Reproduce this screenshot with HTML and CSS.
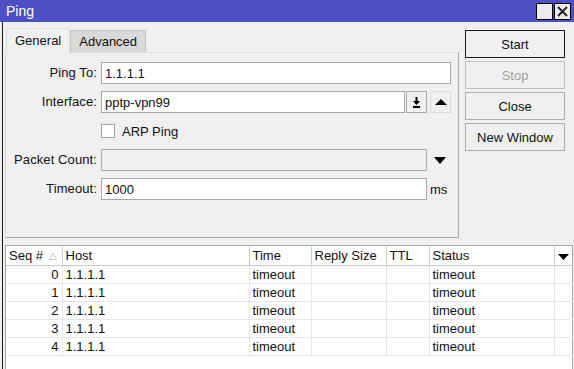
FILE: index.html
```html
<!DOCTYPE html>
<html lang="en">
<head>
    <meta charset="UTF-8">
    <title>Ping</title>
    <link rel="stylesheet" href="styles.css">
</head>
<body>
    <div class="window">
        <div class="titlebar">
            <span class="title">Ping</span>
            <span class="win-btn"><span class="max-box"></span></span>
            <span class="win-btn">
                <svg width="15" height="15" viewBox="0 0 15 15"><path d="M3 3 L12 12 M12 3 L3 12" stroke="#222" stroke-width="2"/></svg>
            </span>
        </div>
        <div class="body">
            <div class="top">
                <div class="tabs-area">
                    <div class="tabs">
                        <div class="tab active">General</div>
                        <div class="tab">Advanced</div>
                    </div>
                    <div class="tab-panel">
                        <div class="form">
                            <label class="label">Ping To:</label>
                            <div class="field"><input class="input wide" type="text" value="1.1.1.1"></div>

                            <label class="label">Interface:</label>
                            <div class="field">
                                <input class="input iface" type="text" value="pptp-vpn99">
                                <span class="icon-btn">
                                    <svg width="11" height="11" viewBox="0 0 11 11"><path d="M4.5 0 H6.5 V4 H9 L5.5 8 L2 4 H4.5 Z" fill="#000"/><rect x="2" y="9" width="7" height="2" fill="#000"/></svg>
                                </span>
                                <span class="icon-btn light">
                                    <svg width="12" height="8" viewBox="0 0 12 8"><path d="M0 7 L6 1 L12 7 Z" fill="#000"/></svg>
                                </span>
                            </div>

                            <span></span>
                            <div class="field check-row">
                                <span class="checkbox"></span>
                                <span>ARP Ping</span>
                            </div>

                            <label class="label">Packet Count:</label>
                            <div class="field">
                                <input class="input short" type="text" disabled>
                                <span class="drop">
                                    <svg width="12" height="7" viewBox="0 0 12 7"><path d="M0 0 L12 0 L6 7 Z" fill="#000"/></svg>
                                </span>
                            </div>

                            <label class="label">Timeout:</label>
                            <div class="field">
                                <input class="input short" type="text" value="1000">
                                <span class="unit">ms</span>
                            </div>
                        </div>
                    </div>
                </div>
                <div class="actions">
                    <button class="btn default">Start</button>
                    <button class="btn" disabled>Stop</button>
                    <button class="btn">Close</button>
                    <button class="btn">New Window</button>
                </div>
            </div>

            <div class="results">
                <table class="grid">
                    <colgroup>
                        <col style="width:56px">
                        <col style="width:187px">
                        <col style="width:62px">
                        <col style="width:75px">
                        <col style="width:43px">
                        <col style="width:125px">
                        <col style="width:19px">
                    </colgroup>
                    <thead>
                        <tr>
                            <th>Seq #<svg class="sort" width="8" height="8" viewBox="0 0 8 8"><path d="M0.5 7.5 L4 1 L7.5 7.5 Z" fill="none" stroke="#c8c8c8"/></svg></th>
                            <th>Host</th>
                            <th>Time</th>
                            <th>Reply Size</th>
                            <th>TTL</th>
                            <th>Status</th>
                            <th class="menu"><svg width="11" height="6" viewBox="0 0 11 6"><path d="M0 0 L11 0 L5.5 6 Z" fill="#000"/></svg></th>
                        </tr>
                    </thead>
                    <tbody>
                        <tr><td class="num">0</td><td>1.1.1.1</td><td>timeout</td><td></td><td></td><td>timeout</td><td></td></tr>
                        <tr><td class="num">1</td><td>1.1.1.1</td><td>timeout</td><td></td><td></td><td>timeout</td><td></td></tr>
                        <tr><td class="num">2</td><td>1.1.1.1</td><td>timeout</td><td></td><td></td><td>timeout</td><td></td></tr>
                        <tr><td class="num">3</td><td>1.1.1.1</td><td>timeout</td><td></td><td></td><td>timeout</td><td></td></tr>
                        <tr><td class="num">4</td><td>1.1.1.1</td><td>timeout</td><td></td><td></td><td>timeout</td><td></td></tr>
                    </tbody>
                </table>
            </div>
        </div>
    </div>
</body>
</html>
```

FILE: styles.css
```css
* {
    box-sizing: border-box;
}
body {
    margin: 0;
    font-family: "Liberation Sans", Arial, sans-serif;
    font-size: 13px;
    color: #111;
    background: #f0f0f0;
}
.window {
    width: 574px;
    height: 369px;
    overflow: hidden;
    display: flex;
    flex-direction: column;
}
.titlebar {
    height: 22px;
    flex: none;
    background: #4d50c4;
    color: #fff;
    display: flex;
    align-items: center;
    padding: 0 3px 0 6px;
}
.title {
    flex: 1;
    font-size: 14px;
}
.win-btn {
    width: 17px;
    height: 17px;
    margin-left: 1px;
    border: 1px solid #000;
    background: #ececec;
    display: flex;
    align-items: center;
    justify-content: center;
}
.max-box {
    width: 15px;
    height: 15px;
}
.body {
    flex: 1;
    margin-left: 2px;
    border-left: 1px solid #1a1a1a;
    padding: 6px 0 0 2px;
    display: flex;
    flex-direction: column;
}
.top {
    display: flex;
}
.tabs-area {
    width: 454px;
}
.tabs {
    display: flex;
    align-items: flex-end;
    height: 24px;
    padding-left: 1px;
}
.tab {
    height: 22px;
    line-height: 21px;
    padding: 0 8px;
    border: 1px solid #c4c4c4;
    border-bottom: none;
    background: #d9d9d9;
}
.tab.active {
    height: 25px;
    line-height: 23px;
    margin-bottom: -1px;
    background: #f0f0f0;
    border-color: #e0e0e0;
    position: relative;
}
.tab-panel {
    height: 186px;
    border: 1px solid #a8a8a8;
    border-top-color: #dcdcdc;
    border-left-color: #dcdcdc;
    padding-top: 9px;
}
.form {
    display: grid;
    grid-template-columns: 91px 350px;
    grid-auto-rows: 22px;
    column-gap: 4px;
    row-gap: 7px;
}
.label {
    text-align: right;
    line-height: 22px;
    white-space: nowrap;
    letter-spacing: 0.1px;
}
.field {
    display: flex;
    align-items: center;
}
.input {
    height: 22px;
    border: 1px solid #a8a8a8;
    background: #fff;
    font: inherit;
    color: #111;
    padding: 0 3px;
    outline: none;
}
.input:disabled {
    background: #f0f0f0;
}
.wide {
    width: 350px;
}
.iface {
    width: 305px;
}
.short {
    width: 326px;
}
.icon-btn {
    width: 21px;
    height: 22px;
    margin-left: 1px;
    border: 1px solid #a8a8a8;
    display: flex;
    align-items: center;
    justify-content: center;
}
.icon-btn.light {
    margin-left: 3px;
    border-color: #dadada;
}
.drop {
    margin-left: 7px;
    display: flex;
}
.unit {
    margin-left: 3px;
}
.check-row {
    gap: 7px;
}
.checkbox {
    width: 14px;
    height: 14px;
    border: 1px solid #a0a0a0;
    background: #fff;
}
.actions {
    margin-left: 6px;
    padding-top: 2px;
    display: flex;
    flex-direction: column;
    gap: 3px;
}
.btn {
    width: 100px;
    height: 28px;
    font: inherit;
    color: #111;
    background: #f0f0f0;
    border: 1px solid #adadad;
    padding: 0;
}
.btn.default {
    border-color: #1a1a1a;
}
.btn:disabled {
    color: #a0a0a0;
    border-color: #c0c0c0;
}
.results {
    flex: 1;
    margin-top: 7px;
    width: 568px;
    background: #fff;
    border: 1px solid #a8a8a8;
    border-bottom: none;
}
.grid {
    border-collapse: collapse;
    table-layout: fixed;
    width: 567px;
}
.grid th {
    height: 19px;
    padding: 0 3px;
    text-align: left;
    font-weight: normal;
    white-space: nowrap;
    border-right: 1px solid #d0d0d0;
    border-bottom: 1px solid #c8c8c8;
}
.grid th:last-child,
.grid td:last-child {
    border-right: none;
}
.grid td {
    height: 18px;
    padding: 0 3px;
    white-space: nowrap;
    border-right: 1px solid #e6e6e6;
    border-bottom: 1px solid #e6e6e6;
}
.grid td.num {
    text-align: right;
}
.sort {
    margin-left: 6px;
    vertical-align: 0;
}
.grid th.menu {
    padding: 0 3px;
    text-align: center;
}
```
